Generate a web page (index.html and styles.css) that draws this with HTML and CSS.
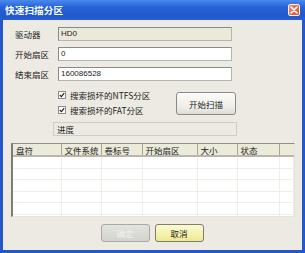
FILE: index.html
```html
<!DOCTYPE html>
<html lang="zh">
<head>
  <meta charset="UTF-8">
  <title>快速扫描分区</title>
  <link rel="stylesheet" href="styles.css">
</head>
<body>
  <div class="window">
    <div class="titlebar">
      <span class="title">快速扫描分区</span>
      <span class="close-btn">
        <svg width="8" height="8" viewBox="0 0 8 8"><path d="M1 1 L7 7 M7 1 L1 7" stroke="#fff" stroke-width="1.6" stroke-linecap="round"/></svg>
      </span>
    </div>
    <div class="content">
      <div class="field">
        <label>驱动器</label>
        <div class="input disabled">HD0</div>
      </div>
      <div class="field">
        <label>开始扇区</label>
        <div class="input">0</div>
      </div>
      <div class="field">
        <label>结束扇区</label>
        <div class="input">160086528</div>
      </div>

      <div class="options">
        <div class="checks">
          <div class="check"><span class="box"><svg width="6" height="6" viewBox="0 0 6 6"><path d="M0.8 3 L2.4 4.6 L5.2 1.2" fill="none" stroke="#222" stroke-width="1.2"/></svg></span>搜索损坏的NTFS分区</div>
          <div class="check"><span class="box"><svg width="6" height="6" viewBox="0 0 6 6"><path d="M0.8 3 L2.4 4.6 L5.2 1.2" fill="none" stroke="#222" stroke-width="1.2"/></svg></span>搜索损坏的FAT分区</div>
        </div>
        <button class="btn scan-btn">开始扫描</button>
      </div>

      <div class="progress">进度</div>

      <div class="list">
        <table>
          <colgroup>
            <col style="width:48px"><col style="width:40px"><col style="width:41px"><col style="width:55px"><col style="width:40px"><col style="width:42px"><col>
          </colgroup>
          <thead>
            <tr><th>盘符</th><th>文件系统</th><th>卷标号</th><th>开始扇区</th><th>大小</th><th>状态</th><th></th></tr>
          </thead>
          <tbody>
            <tr><td></td><td></td><td></td><td></td><td></td><td></td><td></td></tr>
            <tr><td></td><td></td><td></td><td></td><td></td><td></td><td></td></tr>
            <tr><td></td><td></td><td></td><td></td><td></td><td></td><td></td></tr>
            <tr><td></td><td></td><td></td><td></td><td></td><td></td><td></td></tr>
            <tr><td></td><td></td><td></td><td></td><td></td><td></td><td></td></tr>
            <tr><td></td><td></td><td></td><td></td><td></td><td></td><td></td></tr>
          </tbody>
        </table>
      </div>

      <div class="actions">
        <button class="btn ok-btn" disabled>确定</button>
        <button class="btn cancel-btn">取消</button>
      </div>
    </div>
  </div>
</body>
</html>
```

FILE: styles.css
```css
body {
  margin: 0;
  font-family: "Noto Sans CJK SC", "Liberation Sans", sans-serif;
  font-size: 8.5px;
  color: #222;
}
.window {
  width: 305px;
  height: 253px;
  box-sizing: border-box;
  display: flex;
  flex-direction: column;
  background: #2a5fcf;
  border: 3px solid #2457c9;
  border-top: none;
}
.titlebar {
  height: 20px;
  margin: 0 -3px;
  padding: 0 5px 0 5px;
  display: flex;
  align-items: center;
  justify-content: space-between;
  background: linear-gradient(#4a8af0, #2763d6 35%, #1f58cc 80%, #2a60d0);
}
.title {
  color: #fff;
  font-weight: bold;
  font-size: 9.5px;
  letter-spacing: 0.2px;
}
.close-btn {
  width: 12px;
  height: 12px;
  box-sizing: border-box;
  border: 1px solid #f4f4f4;
  border-radius: 2px;
  background: linear-gradient(135deg, #f08a6a, #d9502c);
  display: flex;
  align-items: center;
  justify-content: center;
}
.content {
  flex: 1;
  background: #eceae2;
  padding-top: 7px;
  display: flex;
  flex-direction: column;
}
.field {
  display: flex;
  align-items: center;
  height: 14px;
  margin-bottom: 6px;
}
.field label {
  width: 43px;
  padding-left: 12px;
}
.input {
  width: 174px;
  height: 14px;
  box-sizing: border-box;
  background: #fff;
  border: 1px solid #b4b4b0;
  border-top-color: #8a8a86;
  border-left-color: #8a8a86;
  padding-left: 2px;
  font-size: 8px;
  line-height: 12px;
  font-family: "Liberation Sans", sans-serif;
}
.input.disabled {
  background: #ebe9d9;
}
.options {
  display: flex;
  padding-left: 55px;
}
.checks {
  width: 118px;
}
.check {
  height: 15px;
  display: flex;
  align-items: center;
}
.box {
  width: 8px;
  height: 8px;
  box-sizing: border-box;
  margin-right: 4px;
  border: 1px solid #8c8c88;
  background: #fff;
  display: flex;
  align-items: center;
  justify-content: center;
}
.btn {
  font-family: inherit;
  font-size: 8.5px;
  padding: 0;
  border: 1px solid #8a8a8a;
  border-radius: 3px;
  background: linear-gradient(#fbfbf9, #eeede8 70%, #dcdbd5);
  color: #222;
}
.scan-btn {
  width: 60px;
  height: 23px;
  margin-top: 5px;
}
.progress {
  margin: 5px 0 0 50px;
  width: 184px;
  height: 14px;
  box-sizing: border-box;
  border: 1px solid #cfcdc5;
  padding-left: 3px;
  line-height: 12px;
}
.list {
  margin: 7px 0 0 8px;
  width: 284px;
  height: 74px;
  box-sizing: border-box;
  overflow: hidden;
  background: #fff;
  border: 1px solid #e4e3dc;
  border-top-color: #8f8f8a;
  border-left: 2px solid #7c7c78;
}
.list table {
  width: 100%;
  table-layout: fixed;
  border-collapse: collapse;
}
.list th {
  height: 11px;
  padding: 0 0 0 3px;
  text-align: left;
  font-weight: normal;
  background: #ebeadb;
  border-right: 1px solid #a9a798;
  border-bottom: 2px solid #b9b7a8;
  line-height: 10px;
}
.list th:last-child {
  border-right: none;
}
.list td {
  height: 10.6px;
  padding: 0;
  border-right: 1px solid #efeee8;
  border-bottom: 1px solid #efeee8;
}
.actions {
  display: flex;
  justify-content: center;
  gap: 5px;
  margin-top: 7px;
  padding-right: 1px;
}
.ok-btn, .cancel-btn {
  width: 49px;
  height: 18px;
}
.ok-btn {
  background: linear-gradient(#e2e2de, #d4d4cf);
  border-color: #a8a8a4;
  color: #f2f2ee;
}
.cancel-btn {
  background: linear-gradient(#fbfad2, #f3f0a6 70%, #ece78e);
  border-color: #7f7e70;
}
```
